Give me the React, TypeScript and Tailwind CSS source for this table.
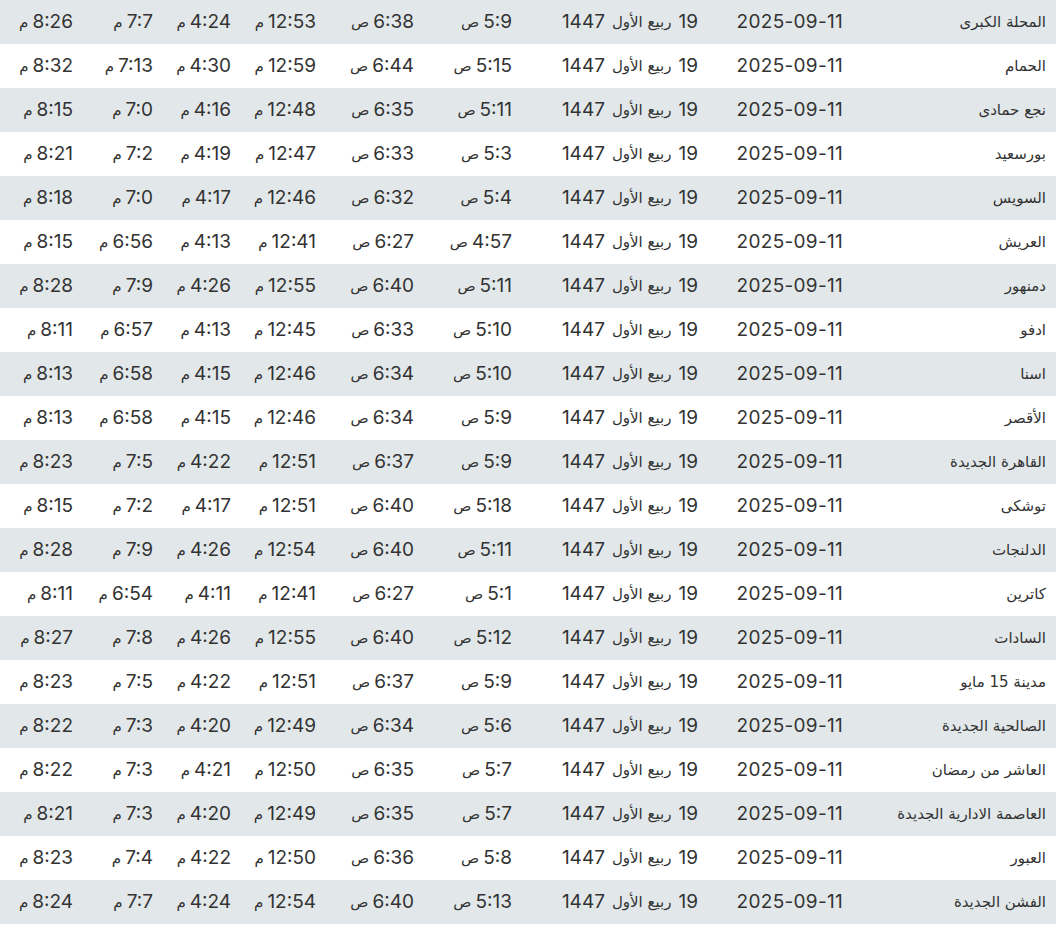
import React from 'react';

type Row = [string, string, string, string, string, string, string];

const rows: Row[] = [
  ['المحلة الكبرى', '5:9 ص', '6:38 ص', '12:53 م', '4:24 م', '7:7 م', '8:26 م'],
  ['الحمام', '5:15 ص', '6:44 ص', '12:59 م', '4:30 م', '7:13 م', '8:32 م'],
  ['نجع حمادى', '5:11 ص', '6:35 ص', '12:48 م', '4:16 م', '7:0 م', '8:15 م'],
  ['بورسعيد', '5:3 ص', '6:33 ص', '12:47 م', '4:19 م', '7:2 م', '8:21 م'],
  ['السويس', '5:4 ص', '6:32 ص', '12:46 م', '4:17 م', '7:0 م', '8:18 م'],
  ['العريش', '4:57 ص', '6:27 ص', '12:41 م', '4:13 م', '6:56 م', '8:15 م'],
  ['دمنهور', '5:11 ص', '6:40 ص', '12:55 م', '4:26 م', '7:9 م', '8:28 م'],
  ['ادفو', '5:10 ص', '6:33 ص', '12:45 م', '4:13 م', '6:57 م', '8:11 م'],
  ['اسنا', '5:10 ص', '6:34 ص', '12:46 م', '4:15 م', '6:58 م', '8:13 م'],
  ['الأقصر', '5:9 ص', '6:34 ص', '12:46 م', '4:15 م', '6:58 م', '8:13 م'],
  ['القاهرة الجديدة', '5:9 ص', '6:37 ص', '12:51 م', '4:22 م', '7:5 م', '8:23 م'],
  ['توشكى', '5:18 ص', '6:40 ص', '12:51 م', '4:17 م', '7:2 م', '8:15 م'],
  ['الدلنجات', '5:11 ص', '6:40 ص', '12:54 م', '4:26 م', '7:9 م', '8:28 م'],
  ['كاترين', '5:1 ص', '6:27 ص', '12:41 م', '4:11 م', '6:54 م', '8:11 م'],
  ['السادات', '5:12 ص', '6:40 ص', '12:55 م', '4:26 م', '7:8 م', '8:27 م'],
  ['مدينة 15 مايو', '5:9 ص', '6:37 ص', '12:51 م', '4:22 م', '7:5 م', '8:23 م'],
  ['الصالحية الجديدة', '5:6 ص', '6:34 ص', '12:49 م', '4:20 م', '7:3 م', '8:22 م'],
  ['العاشر من رمضان', '5:7 ص', '6:35 ص', '12:50 م', '4:21 م', '7:3 م', '8:22 م'],
  ['العاصمة الادارية الجديدة', '5:7 ص', '6:35 ص', '12:49 م', '4:20 م', '7:3 م', '8:21 م'],
  ['العبور', '5:8 ص', '6:36 ص', '12:50 م', '4:22 م', '7:4 م', '8:23 م'],
  ['الفشن الجديدة', '5:13 ص', '6:40 ص', '12:54 م', '4:24 م', '7:7 م', '8:24 م'],
];

const cell = 'flex items-center pr-[10px] whitespace-nowrap';
const ar = 'text-[15px]';
const arFont = { fontFamily: '"DejaVu Sans", sans-serif' };

function Time({ value }: { value: string }) {
  const [num, suffix] = value.split(' ');
  return (
    <div className={`${cell} gap-[4px]`}>
      <span>{num}</span>
      <span className={ar} style={arFont}>
        {suffix}
      </span>
    </div>
  );
}

export default function App() {
  return (
    <div
      dir="rtl"
      className="w-[1056px] h-[933px] bg-white text-[#333333] text-[19px] overflow-hidden"
      style={{ fontFamily: 'Inter, "DejaVu Sans", sans-serif' }}
    >
      {rows.map((r, i) => (
        <div
          key={i}
          className={`grid grid-cols-[203px_145px_186px_98px_98px_85px_78px_80px_83px] h-[44px] ${
            i % 2 === 0 ? 'bg-[#e2e8ea]' : 'bg-white'
          }`}
        >
          <div className={`${cell} text-[15px]`} style={arFont}>
            {r[0]}
          </div>
          <div className={`${cell} tracking-[0.3px]`}>2025-09-11</div>
          <div className={`${cell} gap-[7px]`}>
            <span>19</span>
            <span className={ar} style={arFont}>
              ربيع الأول
            </span>
            <span>1447</span>
          </div>
          {r.slice(1).map((t, j) => (
            <Time key={j} value={t} />
          ))}
        </div>
      ))}
    </div>
  );
}
